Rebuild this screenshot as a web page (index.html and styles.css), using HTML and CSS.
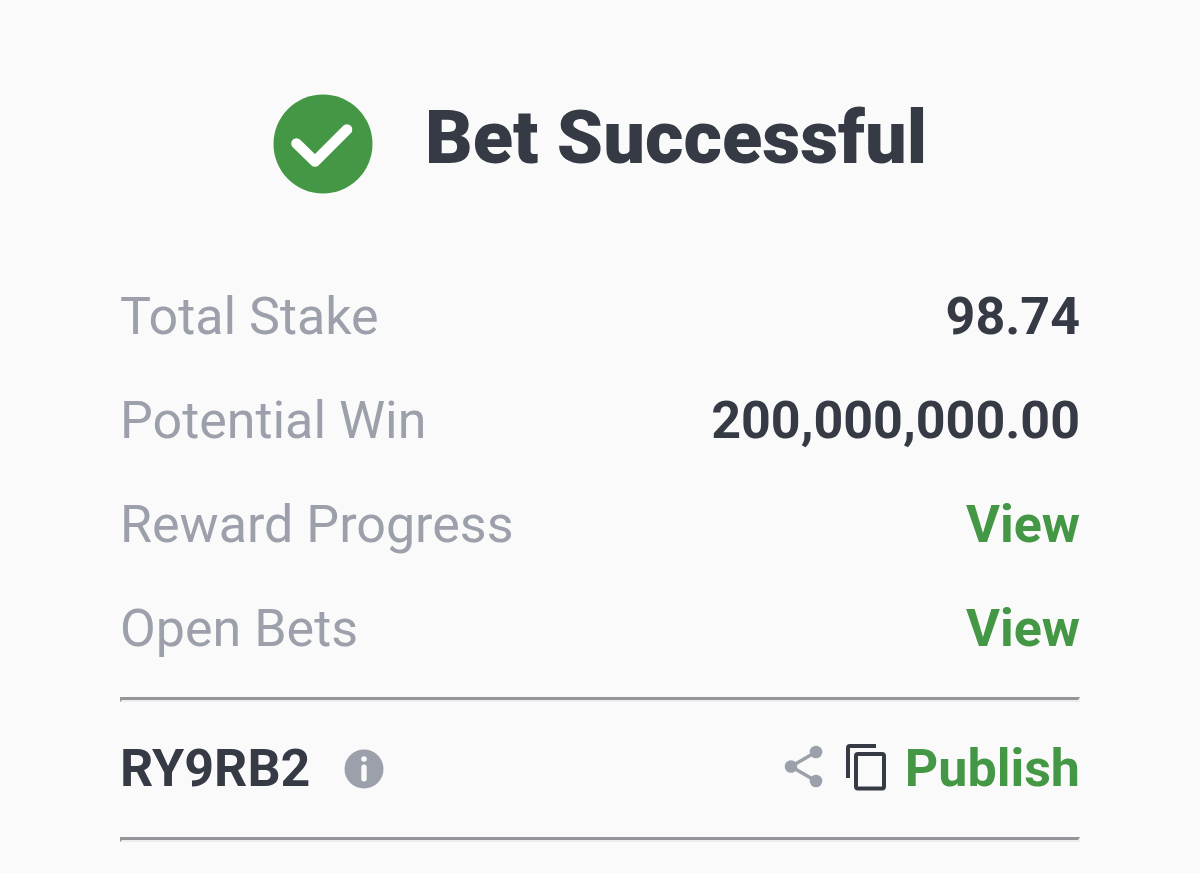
FILE: index.html
```html
<!DOCTYPE html>
<html lang="en">
<head>
    <meta charset="UTF-8">
    <meta name="viewport" content="width=device-width, initial-scale=1.0">
    <title>Bet Successful</title>
    <link rel="stylesheet" href="styles.css">
</head>
<body>
    <main class="receipt">
        <div class="header">
            <svg class="check-icon" viewBox="0 0 100 100" aria-hidden="true">
                <circle cx="50" cy="50" r="49.5" fill="#449744"/>
                <path d="M23.5 49.5 L42 67.5 L74 35.5" fill="none" stroke="#fff" stroke-width="10.6" stroke-linecap="round" stroke-linejoin="round"/>
            </svg>
            <h1>Bet Successful</h1>
        </div>

        <dl class="details">
            <div class="row">
                <dt>Total Stake</dt>
                <dd>98.74</dd>
            </div>
            <div class="row">
                <dt>Potential Win</dt>
                <dd>200,000,000.00</dd>
            </div>
            <div class="row">
                <dt>Reward Progress</dt>
                <dd><a href="#rewards">View</a></dd>
            </div>
            <div class="row">
                <dt>Open Bets</dt>
                <dd><a href="#bets">View</a></dd>
            </div>
        </dl>

        <hr>
        <div class="booking">
            <div class="code">
                <span>RY9RB2</span>
                <button type="button" class="icon-button" aria-label="About this code">
                    <svg class="info-icon" viewBox="0 0 40 40">
                        <circle cx="20" cy="20" r="19.5" fill="#9ca0ab"/>
                        <circle cx="20" cy="10" r="2.8" fill="#fafafa"/>
                        <rect x="17.3" y="15.5" width="5.4" height="17" rx="2.7" fill="#fafafa"/>
                    </svg>
                </button>
            </div>
            <div class="actions">
                <button type="button" class="icon-button" aria-label="Share">
                    <svg class="share-icon" viewBox="0 0 44 48">
                        <path d="M33 7 L8 21.5 L33 36" fill="none" stroke="#9ca0ab" stroke-width="3.4"/>
                        <circle cx="33" cy="7" r="6.3" fill="#9ca0ab"/>
                        <circle cx="8" cy="21.5" r="6.3" fill="#9ca0ab"/>
                        <circle cx="33" cy="36" r="6.3" fill="#9ca0ab"/>
                    </svg>
                </button>
                <button type="button" class="icon-button" aria-label="Copy">
                    <svg class="copy-icon" viewBox="0 0 40 50">
                        <path d="M2 34V4q0-2 2-2h26" fill="none" stroke="#353a45" stroke-width="4"/>
                        <rect x="10" y="10" width="28" height="34.5" rx="2" fill="none" stroke="#353a45" stroke-width="4"/>
                    </svg>
                </button>
                <button type="button" class="publish">Publish</button>
            </div>
        </div>
        <hr>
    </main>
</body>
</html>
```

FILE: styles.css
```css
* {
    box-sizing: border-box;
}
body {
    margin: 0;
    background-color: #fafafa;
    color: #353a45;
    font-family: Roboto, Arial, sans-serif;
}
.receipt {
    padding: 88px 10% 24px;
}
.header {
    display: flex;
    justify-content: center;
    gap: 52px;
    margin-bottom: 71px;
}
.header h1 {
    margin: 0;
    font-size: 74px;
    font-weight: 900;
    line-height: 100px;
}
.check-icon {
    width: 100px;
    height: 100px;
    margin-top: 6px;
}
.details {
    margin: 0;
    padding-bottom: 16px;
}
.row {
    display: flex;
    justify-content: space-between;
    font-size: 52px;
    line-height: 104px;
}
.row dt {
    color: #9ca0ab;
}
.row dd {
    margin: 0;
    font-weight: bold;
}
.row a {
    color: #449744;
    text-decoration: none;
}
hr {
    margin: 0;
    border-style: solid;
    border-width: 3px 2px 2px;
    border-color: #949499 #ededf1 #ededf1 #949499;
}
.booking {
    display: flex;
    justify-content: space-between;
    align-items: center;
    height: 135px;
    padding-bottom: 2px;
    font-size: 52px;
    font-weight: bold;
}
.code,
.actions {
    display: flex;
    align-items: center;
}
.code {
    gap: 34px;
}
.actions {
    gap: 19px;
}
.icon-button {
    display: flex;
    padding: 0;
    border: none;
    background: none;
    cursor: pointer;
}
.info-icon {
    width: 40px;
    height: 40px;
}
.share-icon {
    width: 44px;
    height: 48px;
}
.copy-icon {
    width: 40px;
    height: 50px;
}
.publish {
    padding: 0;
    border: none;
    background: none;
    color: #449744;
    font: inherit;
    cursor: pointer;
}
```
